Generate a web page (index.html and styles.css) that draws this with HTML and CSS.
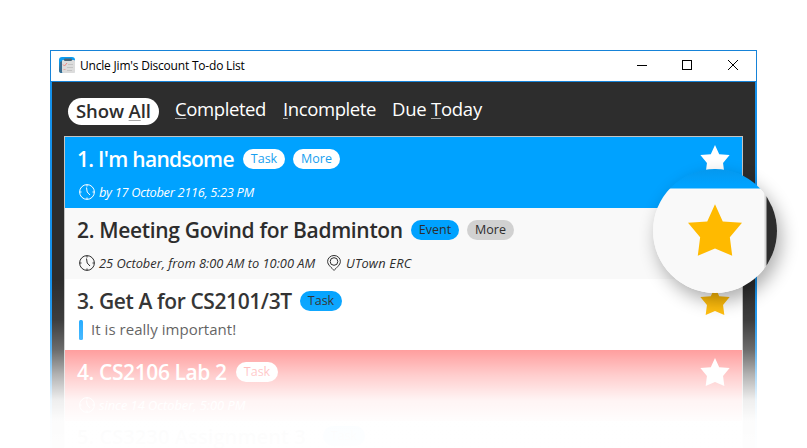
FILE: index.html
```html
<!DOCTYPE html>
<html lang="en">
<head>
<meta charset="utf-8">
<title>Uncle Jim's Discount To-do List</title>
<link rel="stylesheet" href="styles.css">
</head>
<body>
<svg class="defs" width="0" height="0">
  <symbol id="star" viewBox="0 0 160 153"><path d="M80 0L103 51L160 55L124 98L131 153L80 131L29 153L36 98L0 55L57 51Z" fill="currentColor"/></symbol>
  <symbol id="clock" viewBox="0 0 16 16"><g fill="none" stroke="currentColor"><circle cx="8" cy="8" r="7.4"/><path d="M7.5 3.5L8.2 8L11 11M8 1v1.5M8 13.500v1.500M1 8h1.500M13.500 8h1.500"/></g></symbol>
  <symbol id="pin" viewBox="0 0 14 16"><g fill="none" stroke="currentColor"><path d="M7 15.400C5 13 .6 10 .6 6.500A6.400 6 0 0 1 13.400 6.500C13.400 10 9 13 7 15.400Z"/><circle cx="7" cy="6.500" r="3.800"/></g></symbol>
</svg>
<main class="window">
  <header class="titlebar">
    <svg class="app-icon" width="16" height="16" viewBox="0 0 16 16">
      <rect width="16" height="16" rx="3" fill="#0b9cf0"/>
      <path d="M1 5L3 4V16H2Q0 16 0 13Z" fill="#3a6d90"/>
      <rect x="3" y="3" width="13" height="13" rx="1" fill="#dcdcdc"/>
      <rect x="5" y="1.500" width="8" height="2.500" rx="1" fill="#4d6474"/>
      <path d="M4 7.500l1.500 1.500L8 6" fill="none" stroke="#ee8580"/>
      <path d="M4.500 12.500h2" stroke="#eba9a5"/>
      <path d="M9 7.500h5M8 10.500h6M8 13.500h5" stroke="#c4c4c4"/>
    </svg>
    <span class="app-name">Uncle Jim's Discount To-do List</span>
    <svg class="controls" width="104" height="12" viewBox="0 0 104 12" fill="none" stroke="#000">
      <path d="M1 6.500H11"/><rect x="46.500" y="1.500" width="9" height="9"/><path d="M92 1L102 11M102 1L92 11"/>
    </svg>
  </header>
  <nav class="tabs">
    <span class="tab active">Show <u>A</u>ll</span>
    <span class="tab completed"><u>C</u>ompleted</span>
    <span class="tab incomplete"><u>I</u>ncomplete</span>
    <span class="tab today">Due <u>T</u>oday</span>
  </nav>
  <section class="list">
    <article class="task selected">
      <div class="head"><h2 class="t1">1. I'm handsome</h2><span class="tag">Task</span><span class="tag more">More</span></div>
      <div class="meta"><svg class="clock"><use href="#clock"/></svg><span class="m1">by 17 October 2116, 5:23 PM</span></div>
      <svg class="star"><use href="#star"/></svg>
    </article>
    <article class="task alt">
      <div class="head"><h2 class="t2">2. Meeting Govind for Badminton</h2><span class="tag event">Event</span><span class="tag more">More</span></div>
      <div class="meta"><svg class="clock"><use href="#clock"/></svg><span class="m2">25 October, from 8:00 AM to 10:00 AM</span><svg class="pin"><use href="#pin"/></svg><span class="place">UTown ERC</span></div>
      <svg class="star gold"><use href="#star"/></svg>
    </article>
    <article class="task">
      <div class="head"><h2 class="t3">3. Get A for CS2101/3T</h2><span class="tag">Task</span></div>
      <p class="note"><span>It is really important!</span></p>
      <svg class="star gold"><use href="#star"/></svg>
    </article>
    <article class="task overdue">
      <div class="head"><h2 class="t4">4. CS2106 Lab 2</h2><span class="tag">Task</span></div>
      <div class="meta"><svg class="clock"><use href="#clock"/></svg><span class="m4">since 14 October, 5:00 PM</span></div>
      <svg class="star"><use href="#star"/></svg>
    </article>
    <article class="task alt last">
      <div class="head"><h2 class="t5">5. CS3230 Assignment 3</h2><span class="tag">Task</span></div>
    </article>
  </section>
</main>
<div class="fade"></div>
<div class="lens"><svg class="lens-star"><use href="#star"/></svg></div>
</body>
</html>
```
FILE: styles.css
```css
* { box-sizing: border-box; }
body { margin: 0; padding: 50px 50px 0; width: 807px; height: 448px; overflow: hidden; position: relative; background: #fff; font-family: "Open Sans", "Noto Sans", sans-serif; color: #2d2d2d; }
.defs { position: absolute; }
.window { width: 707px; height: 398px; background: #2d2d2d; border: solid #1592ec; border-width: 0 2px; }
.titlebar { height: 32px; margin: 0 -2px; border: 1px solid #1683d8; background: #fff; display: flex; align-items: center; padding: 0 16px 0 8px; color: #000; }
.app-icon { margin-top: -2px; }
.app-name { margin-left: 5px; font-size: 12px; letter-spacing: -.2px; white-space: nowrap; margin-top: -1px; }
.controls { margin-left: auto; margin-top: -2px; }
.tabs { height: 54px; padding: 16px 0 0 16px; display: flex; align-items: flex-start; color: #fff; font-size: 18.500px; line-height: 23px; white-space: nowrap; }
.tab { height: 27px; font-weight: 400; margin-top: -1px; }
.tab u { text-decoration-thickness: 1px; text-underline-offset: 2px; text-decoration-color: #aaa; }
.tab.active { width: 91px; margin: 0 16px 0 0; padding: 1px 0 0 8px; border-radius: 14px; background: #fff; color: #2d2d2d; font-weight: 600; letter-spacing: -.1px; }
.completed { width: 108px; letter-spacing: -.4px; }
.incomplete { width: 109px; letter-spacing: -.4px; }
.today { letter-spacing: -.25px; }
.list { width: 679px; margin-left: 12px; border: 1px solid #c4c4c4; border-bottom: 0; background: #fff; }
.task { height: 71px; padding: 11px 0 0 12px; position: relative; background: #fff; }
.alt { background: #f9f9f9; }
.last { height: 27px; padding-top: 4px; }
.selected { background: #00a2ff; color: #fff; }
.overdue { background: #ff7474; color: #fff; }
.head { display: flex; align-items: center; height: 22px; }
h2 { margin: 0; font-size: 21px; font-weight: 600; line-height: 22px; white-space: nowrap; }
.t1 { width: 158px; letter-spacing: -.7px; }
.t2 { width: 326px; letter-spacing: -.33px; }
.t3 { width: 215px; letter-spacing: -.4px; }
.t4 { width: 151px; letter-spacing: -.4px; }
.t5 { width: 238px; letter-spacing: .1px; font-size: 20px; line-height: 19px; font-weight: 600; }
.tag { width: 42px; height: 20px; margin-left: 8px; border-radius: 10px; background: #00a2ff; font-size: 12.500px; line-height: 20px; text-align: center; font-weight: 400; }
.tag.event { width: 48px; }
.tag.more { width: 47px; background: #d1d1d1; }
.selected .tag { background: #fff; color: #189fef; }
.overdue .tag { background: #fff; color: #ff7474; }
.meta { display: flex; align-items: center; height: 18px; margin-top: 13px; padding-left: 2px; font-size: 12.800px; font-style: italic; white-space: nowrap; }
.clock { width: 16px; height: 16px; margin-right: 4px; flex: none; }
.pin { width: 14px; height: 16px; margin-right: 5px; flex: none; }
.m1 { letter-spacing: -.3px; }
.m2 { width: 228px; letter-spacing: 0; }
.m4 { letter-spacing: 0; }
.place { letter-spacing: .2px; }
.note { display: flex; align-items: center; margin: 8px 0 0 2px; height: 20px; font-size: 15px; line-height: 18px; color: #484848; }
.note::before { content: ""; width: 4px; height: 20px; margin-right: 8px; border-radius: 1.500px; background: #14a5ff; }
.note span { letter-spacing: .04px; padding-bottom: 2px; }
.star { position: absolute; left: 635px; top: 8px; width: 30px; height: 28px; }
.gold { color: #ffba00; }
.fade { position: absolute; left: 0; right: 0; top: 280px; bottom: 0; background: linear-gradient(rgba(255,255,255,0), rgba(255,255,255,.08) 40px, rgba(255,255,255,.3) 70px, rgba(255,255,255,.64) 95px, rgba(255,255,255,.92) 120px, rgba(255,255,255,.985) 140px, rgba(255,255,255,.992) 168px); }
.lens { position: absolute; left: 653px; top: 169px; width: 124px; height: 124px; border-radius: 50%; display: flex; justify-content: center; padding-top: 35px; color: #ffba00; background: linear-gradient(#0598ee, #00a2ff 16px, #00a2ff 19px, transparent 20px), linear-gradient(90deg, #f9f9f9 111px, #d5d5d5 112px, #d5d5d5 113px, #2d2d2d 114px); box-shadow: 4px 8px 18px rgba(0,0,0,.32); }
.lens-star { width: 54px; height: 52px; }
```
